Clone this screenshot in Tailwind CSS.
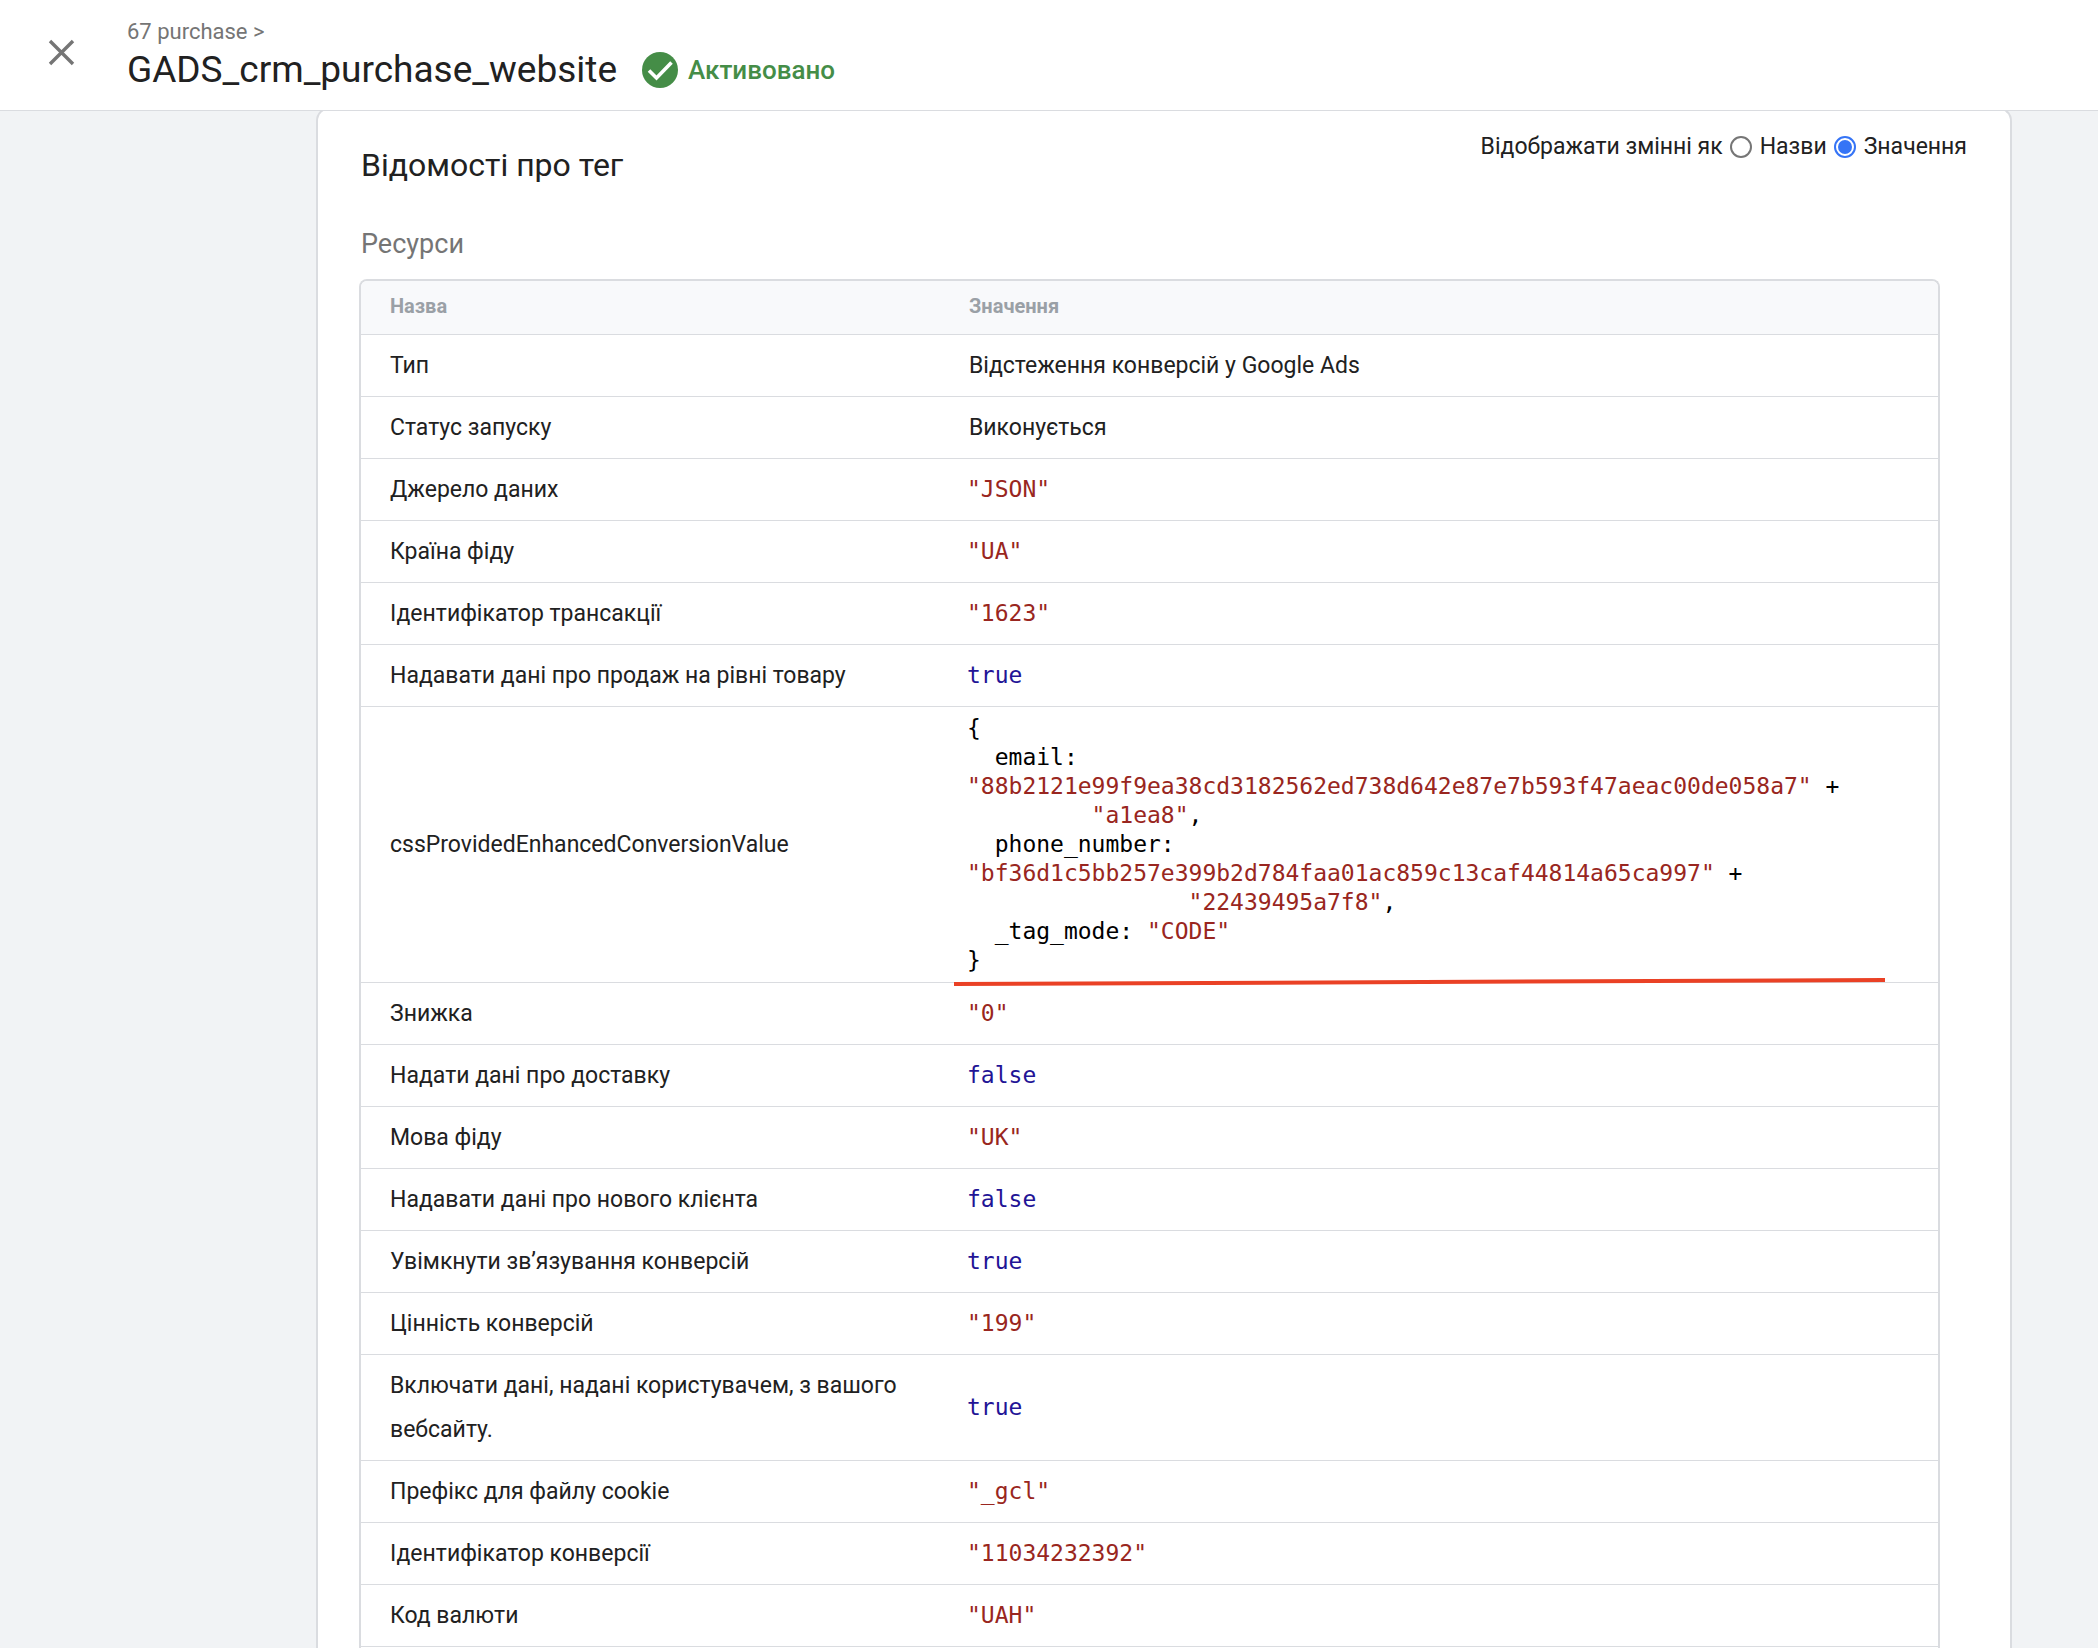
<!DOCTYPE html>
<html lang="uk">
<head>
<meta charset="utf-8">
<meta name="viewport" content="width=device-width, initial-scale=1">
<title>GADS_crm_purchase_website</title>
<script src="https://cdn.jsdelivr.net/npm/@tailwindcss/browser@4"></script>
</head>
<body class="flex min-h-screen flex-col bg-[#f1f3f5] font-['Roboto',sans-serif] text-[23px] text-[#212121]">

<header class="relative z-10 flex h-[111px] shrink-0 items-start border-b border-[#dadce0] bg-white pl-11">
  <button type="button" aria-label="Закрити" class="mt-[35px] mr-12 size-[35px] shrink-0">
    <svg viewBox="0 0 35 35" class="size-full" fill="none" stroke="#757575" stroke-width="3.4"><path d="M6 6 29 29M29 6 6 29"/></svg>
  </button>
  <div class="pt-[18px]">
    <a href="#" class="block text-[22px] leading-7 text-[#757575]">67 purchase &gt;</a>
    <div class="flex items-center">
      <h1 class="text-[37px] leading-[48px]">GADS_crm_purchase_website</h1>
      <svg viewBox="0 0 36 36" class="mr-2.5 ml-[25px] size-9"><circle cx="18" cy="18" r="18" fill="#458d47"/><path d="M7 18.500 14.500 26 29.500 10.500" fill="none" stroke="#fff" stroke-width="3.600"/></svg>
      <span class="text-[26px] leading-[48px] font-medium text-[#458d47]">Активовано</span>
    </div>
  </div>
</header>

<main class="flex flex-1 flex-col pr-[86px] pl-[316px]">
  <section class="-mt-1 flex flex-1 flex-col rounded-t-[14px] border-2 border-b-0 border-[#dadce0] bg-white pt-[23px] pr-[43px] pl-[41px]">
    <div class="flex items-start justify-between pl-0.5">
      <h2 class="mt-[13px] text-[32px] leading-10">Відомості про тег</h2>
      <fieldset class="flex items-center gap-[7px] leading-[30px]">
        <span>Відображати змінні як</span>
        <label class="flex items-center gap-2"><input type="radio" name="show" class="size-[22px] appearance-none rounded-full border-2 border-[#767676] bg-clip-content p-0.5 checked:border-[#3574f6] checked:bg-[#3574f6]">Назви</label>
        <label class="flex items-center gap-2"><input type="radio" name="show" checked class="size-[22px] appearance-none rounded-full border-2 border-[#767676] bg-clip-content p-0.5 checked:border-[#3574f6] checked:bg-[#3574f6]">Значення</label>
      </fieldset>
    </div>
    <h3 class="mt-[43px] pl-0.5 text-[27px] leading-8 text-[#757575]">Ресурси</h3>

    <div class="mt-[19px] mr-[27px] flex-1 rounded-t-lg border-2 border-b-0 border-[#dadce0]">
      <table class="w-full table-fixed border-separate border-spacing-0 text-left [&_td]:border-b [&_td]:border-[#dadce0] [&_td]:pl-[29px] [&_th]:border-b [&_th]:border-[#dadce0] [&_th]:pl-[29px]">
        <colgroup><col class="w-[579px]"><col></colgroup>
        <thead class="text-[20px] leading-[26px] text-[#9aa0a6]">
          <tr><th class="rounded-tl-md bg-[#f8f9fb] pt-3 pb-[15px] font-bold">Назва</th><th class="rounded-tr-md bg-[#f8f9fb] pt-3 pb-[15px] font-bold">Значення</th></tr>
        </thead>
        <tbody id="rows" class="leading-[44px]"></tbody>
      </table>
    </div>
  </section>
</main>

<template id="object-value">
  <div class="-ml-0.5 py-[7px] font-['DejaVu_Sans_Mono',monospace] leading-[29px] whitespace-pre text-black"><div>{</div><div class="pl-[2ch]">email:</div><div><span class="text-[#992620]">"88b2121e99f9ea38cd3182562ed738d642e87e7b593f47aeac00de058a7"</span> +</div><div class="pl-[9ch]"><span class="text-[#992620]">"a1ea8"</span>,</div><div class="pl-[2ch]">phone_number:</div><div><span class="text-[#992620]">"bf36d1c5bb257e399b2d784faa01ac859c13caf44814a65ca997"</span> +</div><div class="pl-[16ch]"><span class="text-[#992620]">"22439495a7f8"</span>,</div><div class="pl-[2ch]">_tag_mode: <span class="text-[#992620]">"CODE"</span></div><div>}</div></div>
  <svg class="absolute -bottom-1 left-3.5 h-2 w-[931px]" viewBox="0 0 931 8" preserveAspectRatio="none"><path d="M0 4 931 0V4L0 8Z" fill="#ea4125"/></svg>
</template>

<script>
  const rows = [
    ['Тип', 'Відстеження конверсій у Google Ads', 'text'],
    ['Статус запуску', 'Виконується', 'text'],
    ['Джерело даних', '"JSON"', 'string'],
    ['Країна фіду', '"UA"', 'string'],
    ['Ідентифікатор трансакції', '"1623"', 'string'],
    ['Надавати дані про продаж на рівні товару', 'true', 'bool'],
    ['cssProvidedEnhancedConversionValue', '', 'object'],
    ['Знижка', '"0"', 'string'],
    ['Надати дані про доставку', 'false', 'bool'],
    ['Мова фіду', '"UK"', 'string'],
    ['Надавати дані про нового клієнта', 'false', 'bool'],
    ['Увімкнути зв’язування конверсій', 'true', 'bool'],
    ['Цінність конверсій', '"199"', 'string'],
    ['Включати дані, надані користувачем, з вашого вебсайту.', 'true', 'bool'],
    ['Префікс для файлу cookie', '"_gcl"', 'string'],
    ['Ідентифікатор конверсії', '"11034232392"', 'string'],
    ['Код валюти', '"UAH"', 'string'],
  ];
  const styles = {
    text: 'pt-[9px] pb-2',
    string: "pt-2 pb-[9px] font-['DejaVu_Sans_Mono',monospace] text-[#992620]",
    bool: "pt-2 pb-[9px] font-['DejaVu_Sans_Mono',monospace] text-[#221496]",
    object: 'relative',
  };
  const body = document.getElementById('rows');
  for (const [name, value, kind] of rows) {
    const tr = body.insertRow();
    const key = tr.insertCell();
    key.className = 'pt-[9px] pb-2 pr-8';
    key.textContent = name;
    const cell = tr.insertCell();
    cell.className = styles[kind];
    if (kind === 'object') {
      cell.append(document.getElementById('object-value').content.cloneNode(true));
    } else if (kind === 'text') {
      cell.textContent = value;
    } else {
      const code = document.createElement('div');
      code.className = '-ml-0.5';
      code.textContent = value;
      cell.append(code);
    }
  }
</script>
</body>
</html>
